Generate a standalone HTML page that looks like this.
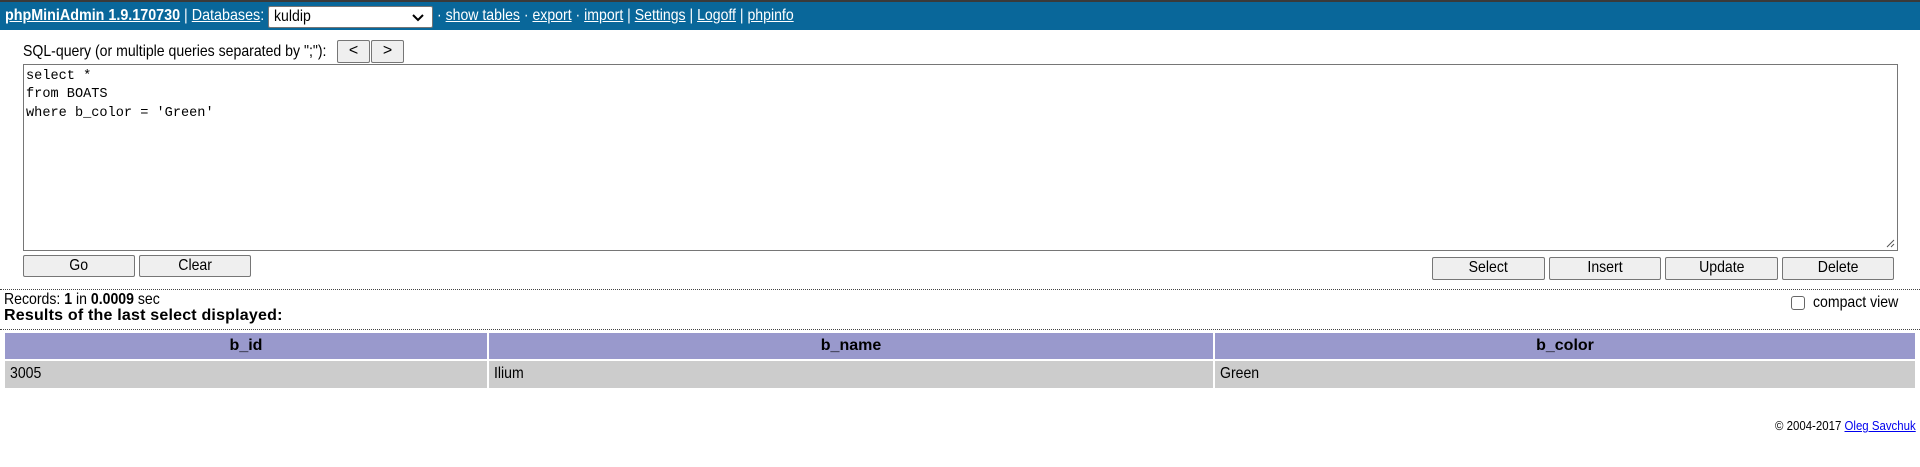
<!DOCTYPE html>
<html><head><meta charset="utf-8"><style>
*{box-sizing:border-box}
body{margin:0;width:1920px;height:467px;background:#fff;font-family:"Liberation Sans",Arial,sans-serif;font-size:16px;color:#000;position:relative;overflow:hidden}
.a{position:absolute}
.n{display:inline-block;transform:scaleX(.88);transform-origin:left center;white-space:nowrap}
.nc{display:inline-block;transform:scaleX(.88);transform-origin:center;white-space:nowrap}
.hdr{left:0;top:0;width:1920px;height:30px;background:#09679a;border-top:2px solid #3a3a3a;color:#fff}
.hdr a{color:#fff;text-decoration:underline}
.hdr .t{position:absolute;top:5px;white-space:nowrap;font-size:16px}
.sel{left:268px;top:4px;width:165px;height:22px;background:#fff;border:1px solid #767676;border-radius:2px;color:#000;padding:1px 5px;font-size:16px}
.btn{position:absolute;background:#efefef;border:1px solid #767676;border-radius:2px;text-align:center;font-size:16px;line-height:20px}
.ta{left:23px;top:64px;width:1875px;height:187px;border:1px solid #767676;font-family:"Liberation Mono","DejaVu Sans Mono",monospace;font-size:13.6px;line-height:18.4px;padding:3px 2px;white-space:pre}
.dot{left:0;width:1920px;height:0;border-top:1px dotted #444}
.cell{position:absolute;height:26px;line-height:26px;padding:0 5px;font-size:16px}
.h{background:#9999cc;font-weight:bold;text-align:center}
.d{background:#cccccc}
</style></head><body>
<div class="a hdr">
<div class="t" style="left:5px"><span class="n" style="transform:scaleX(.895)"><a style="font-weight:bold">phpMiniAdmin 1.9.170730</a> | <a>Databases</a>:</span></div>
<div class="a sel"><span class="n">kuldip</span><svg style="position:absolute;right:8px;top:7px" width="12" height="8" viewBox="0 0 12 8"><path d="M1 1L6 6L11 1" stroke="#000" stroke-width="2" fill="none"/></svg></div>
<div class="t" style="left:437px"><span class="n">· <a>show tables</a> · <a>export</a> · <a>import</a> | <a>Settings</a> | <a>Logoff</a> | <a>phpinfo</a></span></div>
</div>
<div class="a" style="left:23px;top:43px"><span class="n">SQL-query (or multiple queries separated by ";"):</span></div>
<div class="btn" style="left:337px;top:40px;width:33px;height:23px">&lt;</div>
<div class="btn" style="left:371px;top:40px;width:33px;height:23px">&gt;</div>
<div class="a ta">select *
from BOATS
where b_color = 'Green'</div>
<svg class="a" style="left:1885px;top:238px" width="10" height="10"><path d="M9 2L2 9M9 6L6 9" stroke="#555" stroke-width="1"/></svg>
<div class="btn" style="left:23px;top:255px;width:112px;height:22px"><span class="nc">Go</span></div>
<div class="btn" style="left:139px;top:255px;width:112px;height:22px"><span class="nc">Clear</span></div>
<div class="btn" style="left:1432px;top:257px;width:113px;height:23px"><span class="nc">Select</span></div>
<div class="btn" style="left:1549px;top:257px;width:112px;height:23px"><span class="nc">Insert</span></div>
<div class="btn" style="left:1665px;top:257px;width:113px;height:23px"><span class="nc">Update</span></div>
<div class="btn" style="left:1782px;top:257px;width:112px;height:23px"><span class="nc">Delete</span></div>
<div class="a dot" style="top:289px"></div>
<div class="a" style="left:4px;top:291px"><span class="n">Records: <b>1</b> in <b>0.0009</b> sec</span></div>
<div class="a" style="left:4px;top:307px;font-weight:bold;letter-spacing:0.2px">Results of the last select displayed:</div>
<div class="a" style="left:1791px;top:296px;width:14px;height:14px;border:1px solid #666;border-radius:3px"></div>
<div class="a" style="left:1813px;top:294px"><span class="n">compact view</span></div>
<div class="a dot" style="top:329px"></div>
<div class="cell h" style="left:5px;top:333px;width:482px">b_id</div>
<div class="cell h" style="left:489px;top:333px;width:724px">b_name</div>
<div class="cell h" style="left:1215px;top:333px;width:700px">b_color</div>
<div class="cell d" style="left:5px;top:361px;width:482px;height:27px"><span class="n">3005</span></div>
<div class="cell d" style="left:489px;top:361px;width:724px;height:27px"><span class="n">Ilium</span></div>
<div class="cell d" style="left:1215px;top:361px;width:700px;height:27px"><span class="n">Green</span></div>
<div class="a" style="left:1775px;top:418px;font-size:13px"><span class="n">© 2004-2017 <a style="color:#00e;text-decoration:underline">Oleg Savchuk</a></span></div>
</body></html>
